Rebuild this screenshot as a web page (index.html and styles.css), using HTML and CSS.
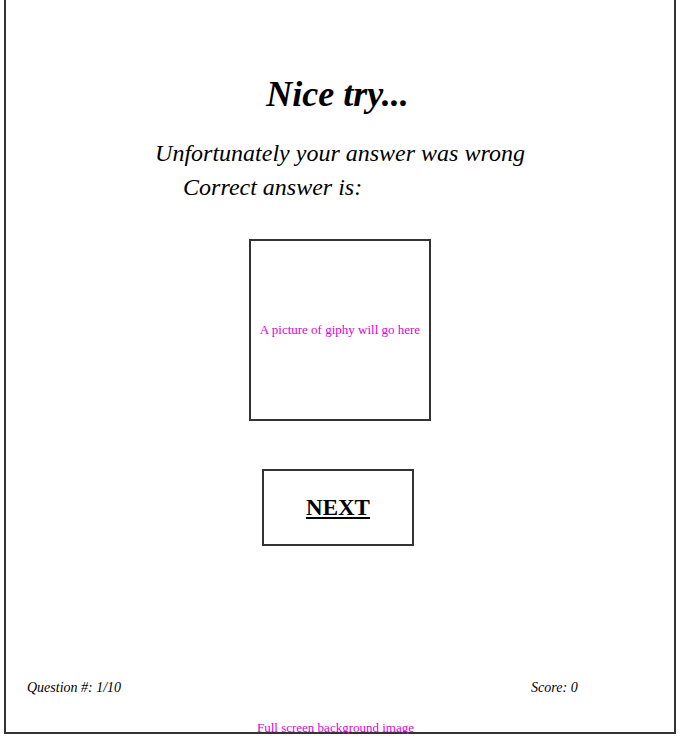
FILE: index.html
```html
<!DOCTYPE html>
<html lang="en">
<head>
    <meta charset="UTF-8">
    <meta name="viewport" content="width=device-width, initial-scale=1.0">
    <title>Nice try</title>
    <link rel="stylesheet" href="styles.css">
</head>
<body>

    <!-- Result screen -->
    <div class="screen">
        <h1 class="title">Nice try...</h1>

        <div class="message">
            <p class="message-line">Unfortunately your answer was wrong</p>
            <p class="message-line indent">Correct answer is:</p>
        </div>

        <!-- Giphy placeholder -->
        <div class="giphy-box">
            <span class="placeholder">A picture of giphy will go here</span>
        </div>

        <!-- Next button -->
        <a class="next-btn" href="#">NEXT</a>

        <!-- Footer stats -->
        <div class="stats">
            <span class="stat">Question #: 1/10</span>
            <span class="stat score">Score: 0</span>
        </div>

        <div class="bg-note">Full screen background image</div>
    </div>

</body>
</html>
```

FILE: styles.css
```css
/* Reset default styles */
* {
    margin: 0;
    padding: 0;
    box-sizing: border-box;
}

body {
    background-color: #fff;
    font-family: "Liberation Serif", "Times New Roman", serif;
    color: #000;
}

/* Outer frame */
.screen {
    width: 672px;
    height: 734px;
    margin-left: 4px;
    border: 2px solid #333;
    border-top: none;
    display: flex;
    flex-direction: column;
    align-items: center;
}

.title {
    margin-top: 73px;
    margin-right: 5px;
    font-size: 36px;
    line-height: 42px;
    font-weight: bold;
    font-style: italic;
}

/* Message lines */
.message {
    margin-top: 21px;
    align-self: center;
}

.message-line {
    font-size: 24px;
    line-height: 34px;
    font-style: italic;
}

.message-line.indent {
    padding-left: 28px;
}

/* Giphy placeholder box */
.giphy-box {
    margin-top: 35px;
    width: 182px;
    height: 182px;
    border: 2px solid #333;
    display: flex;
    justify-content: center;
    align-items: center;
}

.placeholder {
    font-size: 13px;
    color: #e000e0;
}

/* Next button */
.next-btn {
    margin-top: 48px;
    margin-left: -4px;
    width: 152px;
    height: 77px;
    border: 2px solid #333;
    display: flex;
    justify-content: center;
    align-items: center;
    font-size: 23px;
    font-weight: bold;
    color: #000;
    text-decoration: underline;
}

/* Footer */
.stats {
    margin-top: auto;
    width: 100%;
    padding: 0 0 0 21px;
    display: flex;
}

.stat {
    font-size: 14px;
    font-style: italic;
    line-height: 18px;
}

.score {
    margin-left: 410px;
}

.bg-note {
    margin-top: 24px;
    margin-bottom: -2px;
    margin-right: 9px;
    font-size: 13px;
    line-height: 13px;
    color: #e000e0;
    position: relative;
}
```
